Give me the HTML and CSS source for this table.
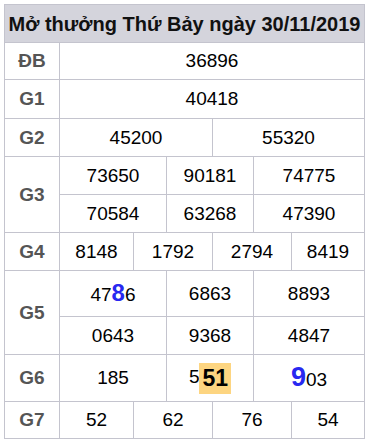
FILE: index.html
```html
<!DOCTYPE html>
<html lang="vi">
<head>
    <meta charset="UTF-8">
    <meta name="viewport" content="width=device-width, initial-scale=1.0">
    <title>Kết quả xổ số</title>
    <link rel="stylesheet" href="styles.css">
</head>
<body>
    <table class="results">
        <colgroup>
            <col class="c-label">
            <col class="c1">
            <col class="c2">
            <col class="c3">
            <col class="c4">
            <col class="c5">
            <col class="c6">
        </colgroup>
        <thead>
            <tr class="r-head">
                <th colspan="7">Mở thưởng Thứ Bảy ngày 30/11/2019</th>
            </tr>
        </thead>
        <tbody>
            <tr class="r-db">
                <td class="prize">ĐB</td>
                <td colspan="6">36896</td>
            </tr>
            <tr class="r-g1">
                <td class="prize">G1</td>
                <td colspan="6">40418</td>
            </tr>
            <tr>
                <td class="prize">G2</td>
                <td colspan="3">45200</td>
                <td colspan="3">55320</td>
            </tr>
            <tr>
                <td class="prize" rowspan="2">G3</td>
                <td colspan="2">73650</td>
                <td colspan="2">90181</td>
                <td colspan="2">74775</td>
            </tr>
            <tr>
                <td colspan="2">70584</td>
                <td colspan="2">63268</td>
                <td colspan="2">47390</td>
            </tr>
            <tr>
                <td class="prize">G4</td>
                <td>8148</td>
                <td colspan="2">1792</td>
                <td colspan="2">2794</td>
                <td>8419</td>
            </tr>
            <tr class="r-tall">
                <td class="prize" rowspan="2">G5</td>
                <td colspan="2">47<b class="hot">8</b>6</td>
                <td colspan="2">6863</td>
                <td colspan="2">8893</td>
            </tr>
            <tr>
                <td colspan="2">0643</td>
                <td colspan="2">9368</td>
                <td colspan="2">4847</td>
            </tr>
            <tr class="r-g6">
                <td class="prize">G6</td>
                <td colspan="2">185</td>
                <td colspan="2">5<b class="mark">51</b></td>
                <td colspan="2"><b class="hot big">9</b>03</td>
            </tr>
            <tr class="r-g7">
                <td class="prize">G7</td>
                <td>52</td>
                <td colspan="2">62</td>
                <td colspan="2">76</td>
                <td>54</td>
            </tr>
        </tbody>
    </table>
</body>
</html>
```

FILE: styles.css
```css
body {
    font-family: "Liberation Sans", Arial, sans-serif;
    background-color: #fff;
    margin: 0;
    padding: 0;
}

.results {
    margin: 4px 0 0 4px;
    width: 361px;
    table-layout: fixed;
    border-collapse: collapse;
    color: #000;
}

.c-label { width: 55px; }
.c1 { width: 74px; }
.c2 { width: 33px; }
.c3 { width: 46px; }
.c4 { width: 41px; }
.c5 { width: 38px; }
.c6 { width: 73px; }

.results th,
.results td {
    border: 1px solid #c4c4ce;
    padding: 0;
    height: 37px;
    text-align: center;
    font-size: 19px;
    line-height: 22px;
}

.results th {
    background-color: #d4d4dc;
    color: #111;
    font-size: 20px;
    font-weight: bold;
    white-space: nowrap;
}

.results .prize {
    font-weight: bold;
    color: #555;
}

.r-db td { height: 36px; }
.r-g1 td { height: 38px; }
.r-tall td { height: 45px; }
.r-g6 td { height: 46px; }
.r-g7 td { height: 36px; }

.hot {
    color: #2828f0;
    font-size: 24px;
}

.hot.big {
    font-size: 27px;
}

.mark {
    display: inline-block;
    background-color: #fdd581;
    color: #000;
    font-size: 23px;
    line-height: 31px;
    padding: 0 3px;
    vertical-align: -3px;
}
```
